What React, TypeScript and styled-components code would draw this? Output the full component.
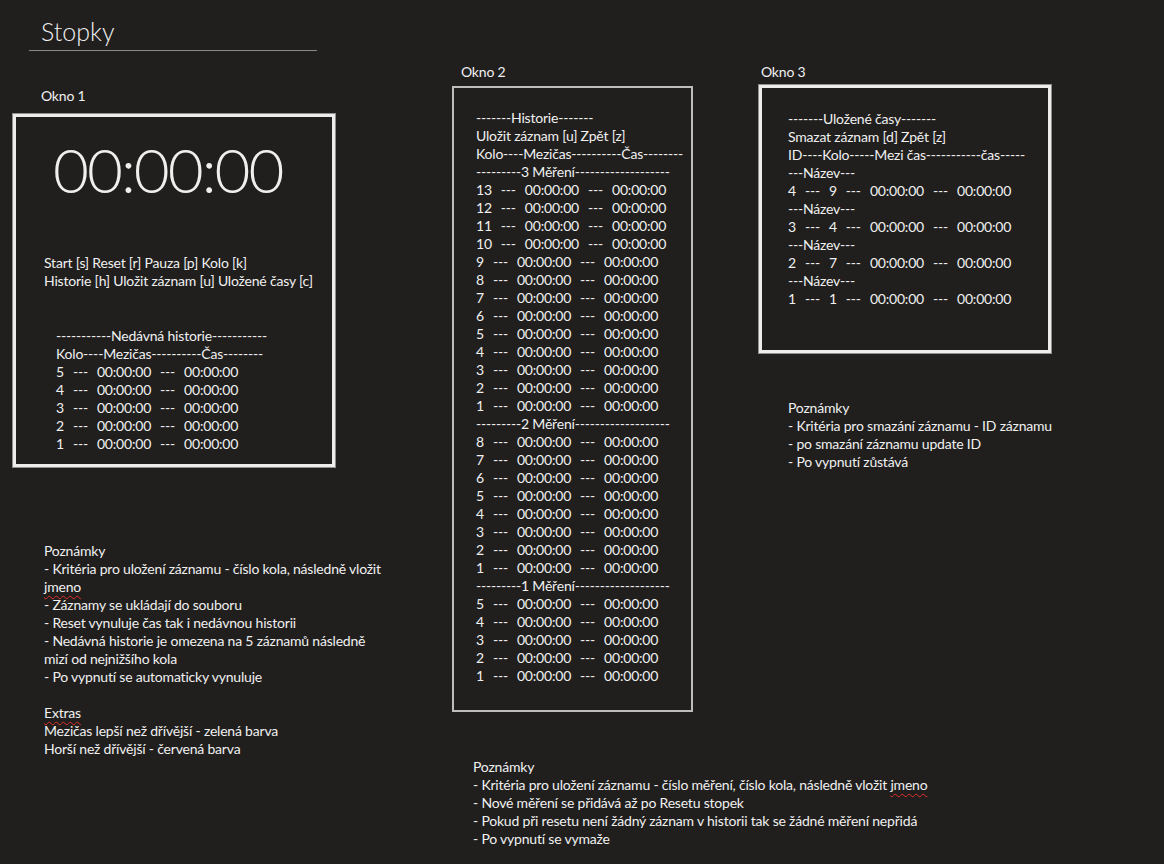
import React from "react";
import styled, { createGlobalStyle } from "styled-components";

const Global = createGlobalStyle`
  html, body { margin: 0; padding: 0; background: #201f1e; }
  body {
    font-family: Lato, "Open Sans", "Noto Sans", sans-serif;
    color: #f0f0f0;
    font-size: 14px;
    letter-spacing: -0.2px;
    line-height: 18px;
  }
`;

const Page = styled.div`
  display: flex;
  align-items: flex-start;
  width: 1164px;
  height: 864px;
  padding-left: 13px;
  box-sizing: border-box;
  overflow: hidden;
`;

const Column = styled.div<{ $top: number; $left: number; $width: number }>`
  display: flex;
  flex-direction: column;
  flex: none;
  width: ${(p) => p.$width}px;
  margin-left: ${(p) => p.$left}px;
  padding-top: ${(p) => p.$top}px;
`;

const TitleBlock = styled.div`
  margin-left: 16px;
  width: 276px;
  padding: 14px 0 0 12px;
  height: 36px;
  box-sizing: content-box;
  border-bottom: 1px solid #8a8a8a;
  font-size: 25px;
  font-weight: 300;
  letter-spacing: 0;
  line-height: 34px;
`;

const Label = styled.div<{ $indent: number; $gap: number; $top?: number }>`
  padding-left: ${(p) => p.$indent}px;
  margin-top: ${(p) => p.$top ?? 0}px;
  margin-bottom: ${(p) => p.$gap}px;
`;

const Box = styled.div<{ $w: number; $h: number; $thick?: boolean }>`
  width: ${(p) => p.$w}px;
  height: ${(p) => p.$h}px;
  box-sizing: border-box;
  border: ${(p) => (p.$thick ? "3px solid #ededed" : "2px solid #bdbdbd")};
  box-shadow: ${(p) => (p.$thick ? "0 0 0 1px #8f8f8f" : "none")};
  display: flex;
  flex-direction: column;
`;

const Clock = styled.div`
  font-size: 62px;
  font-weight: 300;
  line-height: 62px;
  letter-spacing: -2px;
  padding: 21px 0 0 37px;
  color: #efefef;
`;

const Block = styled.div<{ $pl: number; $pt: number }>`
  padding-left: ${(p) => p.$pl}px;
  padding-top: ${(p) => p.$pt}px;
  white-space: nowrap;
`;

const Line = styled.div`
  white-space: pre;
  height: 18px;
`;

const Row = styled.div<{ $gap: number }>`
  display: flex;
  gap: ${(p) => p.$gap}px;
  height: 18px;
  white-space: pre;
`;

const Notes = styled.div<{ $indent: number; $top: number }>`
  margin-left: ${(p) => p.$indent}px;
  margin-top: ${(p) => p.$top}px;
  white-space: nowrap;
`;

const Spell = styled.span`
  text-decoration: underline wavy #e0302a;
  text-decoration-skip-ink: none;
  text-underline-offset: 3px;
  text-decoration-thickness: 1px;
`;

const Blank = styled.div`
  height: 18px;
`;

const T = "00:00:00";

const DataRow = ({ cells, gap }: { cells: string[]; gap: number }) => (
  <Row $gap={gap}>
    {cells.map((c, i) => (
      <span key={i}>{c}</span>
    ))}
  </Row>
);

const lapRow = (n: number) => [String(n), "---", T, "---", T];

export default function App() {
  return (
    <>
      <Global />
      <Page>
        <Column $top={0} $left={0} $width={322}>
          <TitleBlock>Stopky</TitleBlock>
          <Label $indent={28} $gap={9} $top={36}>Okno 1</Label>
          <Box $w={322} $h={353} $thick>
            <Clock>{T}</Clock>
            <Block $pl={28} $pt={54}>
              <Line>Start [s] Reset [r] Pauza [p] Kolo [k]</Line>
              <Line>Historie [h] Uložit záznam [u] Uložené časy [c]</Line>
            </Block>
            <Block $pl={40} $pt={37}>
              <Line>-----------Nedávná historie-----------</Line>
              <Line>Kolo----Mezičas----------Čas--------</Line>
              {[5, 4, 3, 2, 1].map((n) => (
                <DataRow key={n} cells={lapRow(n)} gap={9} />
              ))}
            </Block>
          </Box>
          <Notes $indent={31} $top={75}>
            <Line>Poznámky</Line>
            <Line>- Kritéria pro uložení záznamu - číslo kola, následně vložit</Line>
            <Line><Spell>jmeno</Spell></Line>
            <Line>- Záznamy se ukládají do souboru</Line>
            <Line>- Reset vynuluje čas tak i nedávnou historii</Line>
            <Line>- Nedávná historie je omezena na 5 záznamů následně</Line>
            <Line>mizí od nejnižšího kola</Line>
            <Line>- Po vypnutí se automaticky vynuluje</Line>
            <Blank />
            <Line><Spell>Extras</Spell></Line>
            <Line>Mezičas lepší než dřívější - zelená barva</Line>
            <Line>Horší než dřívější - červená barva</Line>
          </Notes>
        </Column>

        <Column $top={63} $left={117} $width={241}>
          <Label $indent={9} $gap={5}>Okno 2</Label>
          <Box $w={241} $h={626}>
            <Block $pl={22} $pt={21}>
              <Line>-------Historie-------</Line>
              <Line>Uložit záznam [u] Zpět [z]</Line>
              <Line>Kolo----Mezičas----------Čas--------</Line>
              <Line>---------3 Měření-------------------</Line>
              {[13, 12, 11, 10, 9, 8, 7, 6, 5, 4, 3, 2, 1].map((n) => (
                <DataRow key={"a" + n} cells={lapRow(n)} gap={9} />
              ))}
              <Line>---------2 Měření-------------------</Line>
              {[8, 7, 6, 5, 4, 3, 2, 1].map((n) => (
                <DataRow key={"b" + n} cells={lapRow(n)} gap={9} />
              ))}
              <Line>---------1 Měření-------------------</Line>
              {[5, 4, 3, 2, 1].map((n) => (
                <DataRow key={"c" + n} cells={lapRow(n)} gap={9} />
              ))}
            </Block>
          </Box>
          <Notes $indent={21} $top={46}>
            <Line>Poznámky</Line>
            <Line>
              - Kritéria pro uložení záznamu - číslo měření, číslo kola, následně vložit <Spell>jmeno</Spell>
            </Line>
            <Line>- Nové měření se přidává až po Resetu stopek</Line>
            <Line>- Pokud při resetu není žádný záznam v historii tak se žádné měření nepřidá</Line>
            <Line>- Po vypnutí se vymaže</Line>
          </Notes>
        </Column>

        <Column $top={63} $left={66} $width={292}>
          <Label $indent={2} $gap={4}>Okno 3</Label>
          <Box $w={292} $h={268} $thick>
            <Block $pl={26} $pt={22}>
              <Line>-------Uložené časy-------</Line>
              <Line>Smazat záznam [d] Zpět [z]</Line>
              <Line>ID----Kolo-----Mezi čas-----------čas-----</Line>
              {[
                [4, 9],
                [3, 4],
                [2, 7],
                [1, 1],
              ].map(([id, k]) => (
                <React.Fragment key={id}>
                  <Line>---Název---</Line>
                  <DataRow cells={[String(id), "---", String(k), "---", T, "---", T]} gap={9} />
                </React.Fragment>
              ))}
            </Block>
          </Box>
          <Notes $indent={29} $top={46}>
            <Line>Poznámky</Line>
            <Line>- Kritéria pro smazání záznamu - ID záznamu</Line>
            <Line>- po smazání záznamu update ID</Line>
            <Line>- Po vypnutí zůstává</Line>
          </Notes>
        </Column>
      </Page>
    </>
  );
}
